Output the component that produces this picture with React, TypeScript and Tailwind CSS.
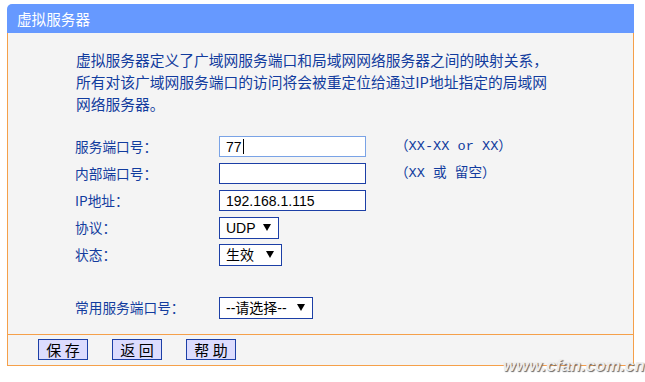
import React from 'react';

const cjk = '"Noto Sans CJK SC", sans-serif';

const Select: React.FC<{ label: string; w: string }> = ({ label, w }) => (
  <div className={`flex items-center justify-between h-[22px] ${w} border border-[#1c3fa6] bg-white pl-[6px] pr-[7px] text-[14px] text-black`}>
    <span className="font-['Liberation_Sans','Noto_Sans_CJK_SC',sans-serif] leading-none">{label}</span>
    <span className="w-0 h-0 border-l-[4px] border-r-[4px] border-t-[7px] border-l-transparent border-r-transparent border-t-black" />
  </div>
);

const Row: React.FC<{ label: string; children: React.ReactNode; hint?: string }> = ({ label, children, hint }) => (
  <div className="flex items-center h-[21px]">
    <div className="w-[144px] text-[13.7px] text-[#123c9e] leading-none">{label}</div>
    <div className="w-[176px]">{children}</div>
    {hint && (
      <div className="text-[13.6px] text-[#123c9e] leading-none font-['Liberation_Mono','Noto_Sans_CJK_SC',monospace] whitespace-pre">
        {hint}
      </div>
    )}
  </div>
);

export default function App() {
  return (
    <div className="relative w-[645px] h-[382px] bg-white overflow-hidden" style={{ fontFamily: cjk }}>
      <div className="pt-[4px] pl-[7px] w-[634px]">
        <div className="h-[29px] bg-[#6699ff] rounded-tl-[5px] flex items-center pl-[10px] text-white text-[14.6px]">
          虚拟服务器
        </div>
        <div className="border-x border-b border-[#f5a04a] bg-[#f4f4f4]">
          <div className="pt-[16px] pb-[16px]">
            <p className="pl-[68px] text-[14.75px] leading-[22px] text-[#123c9e] whitespace-nowrap">
              虚拟服务器定义了广域网服务端口和局域网网络服务器之间的映射关系，
              <br />
              所有对该广域网服务端口的访问将会被重定位给通过IP地址指定的局域网
              <br />
              网络服务器。
            </p>
            <div className="pl-[67px] mt-[21px] flex flex-col gap-[6px]">
              <Row label="服务端口号：" hint="（XX-XX or XX）">
                <div className="w-[147px] h-[21px] border border-[#7aa3e6] bg-white flex items-center pl-[6px] text-[14px] text-black font-['Liberation_Sans',sans-serif] leading-none">
                  77<span className="inline-block w-px h-[15px] bg-black ml-[1px]" />
                </div>
              </Row>
              <Row label="内部端口号：" hint="（XX 或 留空）">
                <div className="w-[147px] h-[21px] border border-[#1c3fa6] bg-white" />
              </Row>
              <Row label="IP地址：">
                <div className="w-[147px] h-[21px] border border-[#1c3fa6] bg-white flex items-center pl-[6px] text-[14px] text-black font-['Liberation_Sans',sans-serif] leading-none">
                  192.168.1.115
                </div>
              </Row>
              <Row label="协议：">
                <Select label="UDP" w="w-[60px]" />
              </Row>
              <Row label="状态：">
                <Select label="生效" w="w-[63px]" />
              </Row>
              <div className="mt-[26px]">
                <Row label="常用服务端口号：">
                  <Select label="--请选择--" w="w-[94px]" />
                </Row>
              </div>
            </div>
          </div>
          <div className="border-t border-[#f5a04a] pt-[4px] pb-[5px] pl-[30px] flex gap-[24px]">
            {['保 存', '返 回', '帮 助'].map(t => (
              <button
                key={t}
                type="button"
                className="w-[50px] h-[21px] bg-[#dcdcfe] border border-[#1c3fa6] text-black text-[15px] leading-none whitespace-pre flex items-center justify-center"
              >
                {t}
              </button>
            ))}
          </div>
        </div>
      </div>
      <div
        className="absolute left-[503px] top-[353px] text-[16.5px] font-bold italic text-[#eeeeee] font-['Liberation_Sans',sans-serif] tracking-[0.2px]"
        style={{ textShadow: '1px 1px 1px #666666' }}
      >
        www.cfan.com.cn
      </div>
    </div>
  );
}
